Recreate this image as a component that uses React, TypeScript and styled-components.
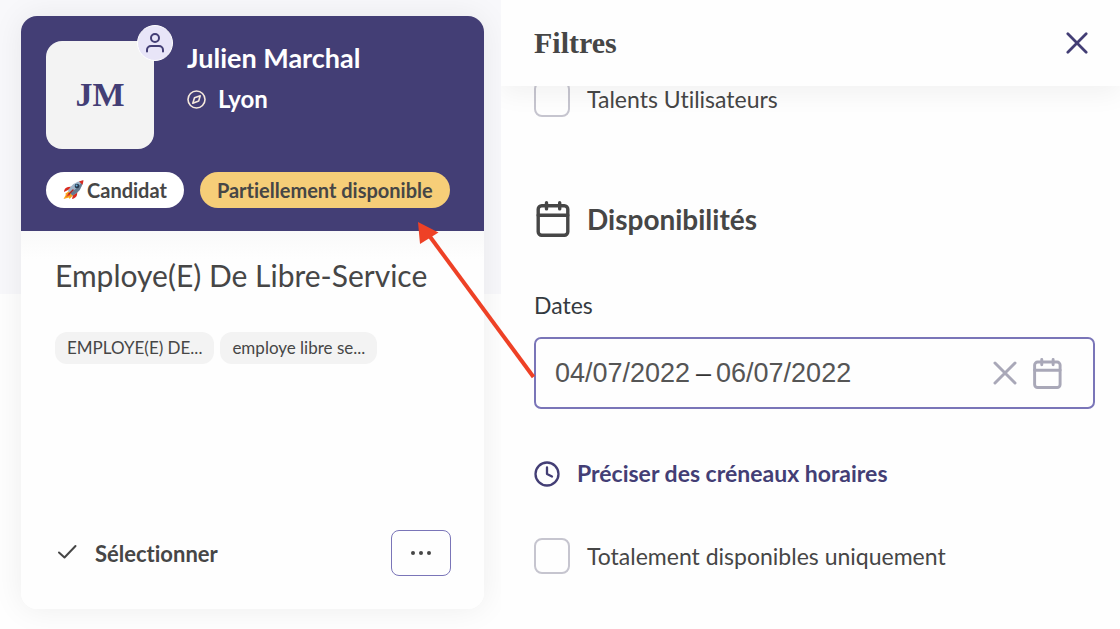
import React from "react";
import styled, { createGlobalStyle } from "styled-components";

const color = {
  indigo: "#433e75",
  outline: "#7a75b8",
  text: "#464646",
  muted: "#a9a8b8",
  chip: "#f3f3f3",
  amber: "#f6ce78",
  arrow: "#ee4126",
};

const GlobalStyle = createGlobalStyle`
  *, *::before, *::after { box-sizing: border-box; }
  body {
    margin: 0;
    background: #fefefe;
    color: ${color.text};
    font-family: Lato, sans-serif;
    font-variant-ligatures: none;
  }
  h1, h2, p { margin: 0; }
  button, input { font: inherit; color: inherit; }
  button { background: none; border: 0; padding: 0; cursor: pointer; font-variant-ligatures: none; }
  svg { display: block; flex: none; }
`;

const Page = styled.div`
  position: relative;
  display: grid;
  grid-template-columns: 501fr 619fr;
  min-height: 100vh;
`;

const Results = styled.main`
  display: flex;
  padding: 16px 17px 20px 21px;
  overflow: hidden;
  background: linear-gradient(#f8f8fb 294px, #fefefe 294px);
`;

const Card = styled.article`
  flex: 1;
  display: flex;
  flex-direction: column;
  min-width: 0;
  border-radius: 16px;
  background: #fefefe;
  box-shadow: 0 0 32px rgba(0, 0, 0, 0.07);
`;

const CardHeader = styled.header`
  padding: 25px 25px 23px;
  border-radius: 16px 16px 0 0;
  background: ${color.indigo};
`;

const Identity = styled.div`
  display: flex;
  gap: 33px;
`;

const Avatar = styled.div`
  position: relative;
  display: grid;
  place-items: center;
  width: 108px;
  height: 108px;
  border-radius: 16px;
  background: ${color.chip};
  color: ${color.indigo};
  font: bold 34px/40px "Liberation Serif", serif;
`;

const AvatarBadge = styled.span`
  position: absolute;
  top: -16px;
  right: -19px;
  display: grid;
  place-items: center;
  width: 36px;
  height: 36px;
  border: 1px solid #fff;
  border-radius: 50%;
  background: #e8e5f8;
`;

const Person = styled.div`
  display: flex;
  flex-direction: column;
  gap: 10px;
  color: #fff;
`;

const Name = styled.h1`
  font-size: 27px;
  line-height: 34px;
`;

const City = styled.p`
  display: flex;
  align-items: center;
  gap: 12px;
  font-size: 24px;
  font-weight: bold;
  line-height: 28px;
`;

const Badges = styled.div`
  display: flex;
  gap: 16px;
  margin-top: 23px;
`;

const Badge = styled.span<{ $tone?: "amber" }>`
  display: flex;
  align-items: center;
  gap: 3px;
  height: 36px;
  padding: 0 17px;
  border-radius: 18px;
  background: ${(p) => (p.$tone === "amber" ? color.amber : "#fff")};
  font-size: 20px;
  font-weight: bold;
  white-space: nowrap;
`;

const CardBody = styled.div`
  flex: 1;
  display: flex;
  flex-direction: column;
  padding: 24px 33px 33px 34px;
  border-radius: 0 0 16px 16px;
  background: linear-gradient(#f9f9f9, #fefefe 28px);
`;

const JobTitle = styled.h2`
  font-size: 30px;
  font-weight: normal;
  line-height: 40px;
`;

const Tags = styled.div`
  display: flex;
  gap: 6px;
  margin-top: 37px;
`;

const Tag = styled.span`
  padding: 0 12px;
  border-radius: 12px;
  background: ${color.chip};
  font-size: 17px;
  line-height: 32px;
  white-space: nowrap;
`;

const CardActions = styled.footer`
  display: flex;
  align-items: center;
  justify-content: space-between;
  margin-top: auto;
`;

const SelectButton = styled.button`
  display: flex;
  align-items: center;
  gap: 16px;
  font-size: 22px;
  font-weight: bold;
`;

const MoreButton = styled.button`
  display: grid;
  place-items: center;
  width: 60px;
  height: 46px;
  border: 1px solid ${color.outline};
  border-radius: 8px;
`;

const Panel = styled.aside`
  display: flex;
  flex-direction: column;
  min-width: 0;
  overflow: clip;
  background: #fefefe;
`;

const PanelHeader = styled.header`
  position: relative;
  z-index: 1;
  display: flex;
  align-items: center;
  justify-content: space-between;
  height: 86px;
  padding: 0 32px 0 33px;
  background: #fefefe;
  box-shadow: 0 8px 24px rgba(0, 0, 0, 0.05);
  color: ${color.indigo};
`;

const PanelTitle = styled.h2`
  color: ${color.text};
  font: bold 30px/36px "Liberation Serif", serif;
`;

const Filters = styled.form`
  display: flex;
  flex-direction: column;
  align-items: stretch;
  margin-top: -5px;
  padding: 0 25px 24px 33px;
`;

const CheckRow = styled.label`
  display: flex;
  align-items: center;
  gap: 17px;
  font-size: 23px;
  line-height: 36px;
`;

const Checkbox = styled.input.attrs({ type: "checkbox" })`
  appearance: none;
  flex: none;
  width: 36px;
  height: 36px;
  margin: 0;
  border: 2px solid #c6c5cf;
  border-radius: 8px;
  background: #fefefe;
`;

const SectionTitle = styled.h2`
  display: flex;
  align-items: center;
  gap: 17px;
  margin-top: 84px;
  font-size: 28px;
  line-height: 36px;
`;

const FieldLabel = styled.label`
  margin-top: 54px;
  font-size: 23px;
  line-height: 28px;
  color: #343a40;
`;

const DateField = styled.div`
  display: flex;
  align-items: center;
  gap: 5px;
  height: 72px;
  margin-top: 18px;
  padding: 0 31px 0 19px;
  border: 2px solid ${color.outline};
  border-radius: 7px;
  color: #333;
  font-family: "Liberation Sans", Arial, sans-serif;
  font-size: 27px;
`;

const DateInput = styled.input`
  width: 136px;
  padding: 0;
  border: 0;
  outline: 0;
  background: none;
  color: #555;
`;

const FieldIcons = styled.div`
  display: flex;
  align-items: center;
  gap: 14px;
  margin-left: auto;
  color: ${color.muted};
`;

const SlotButton = styled.button`
  display: flex;
  align-items: center;
  align-self: flex-start;
  gap: 17px;
  margin: 47px 0;
  color: ${color.indigo};
  font-size: 23px;
  font-weight: bold;
  line-height: 35px;
`;

const Arrow = styled.svg`
  position: absolute;
  top: 220px;
  left: 416px;
  z-index: 2;
  pointer-events: none;
`;

const CalendarIcon = ({ size }: { size: number }) => (
  <svg width={size} height={size} viewBox="0 0 36 36" fill="none" stroke="currentColor" strokeWidth="3.4" strokeLinecap="round">
    <rect x="4.200" y="4.700" width="29.600" height="29.600" rx="3.500" />
    <path d="M4.200 14.300h29.600M12.500 1.700v6.200M25.700 1.700v6.200" />
  </svg>
);

const CloseIcon = ({ size }: { size: number }) => (
  <svg width={size} height={size} viewBox="0 0 24 24" fill="none" stroke="currentColor" strokeWidth="3" strokeLinecap="round">
    <path d="M2 2l20 20M22 2L2 22" />
  </svg>
);

const RocketIcon = () => (
  <svg width="21" height="20" viewBox="0 0 21 20">
    <path d="M5 10L1 12q0-4 4-5l5-.5zM10 15l-1 4q4-1 5-4l.5-5z" fill="#d92b20" />
    <path d="M6 11l-4 3 1 .5L.5 19 6 17.500l.5 1.500 4-4z" fill="#f7a51c" />
    <path d="M5.500 13L3 17l4.500-2z" fill="#e8402a" />
    <path d="M5 11Q9 2 20 .5 19.500 11 9.500 15.500z" fill="#9fb4c8" />
    <path d="M7 13Q14 9 20 .5 19 11 9.500 15.500z" fill="#64798f" />
    <path d="M16 1.500Q18 .7 20.500.3q-.2 2.200-1 4.500z" fill="#d92b20" />
    <circle cx="14" cy="6" r="2.300" fill="#26364b" />
    <circle cx="13.600" cy="5.600" r="1" fill="#6bb5e0" />
    <path d="M6 14l4-4" stroke="#b3231c" strokeWidth="1.500" strokeLinecap="round" />
  </svg>
);

export default function App() {
  return (
    <>
      <GlobalStyle />
      <Page>
        <Results>
          <Card>
            <CardHeader>
              <Identity>
                <Avatar>
                  JM
                  <AvatarBadge>
                    <svg width="20" height="20" viewBox="0 0 20 20" fill="none" stroke={color.indigo} strokeWidth="2" strokeLinecap="round">
                      <circle cx="10" cy="5" r="4" />
                      <path d="M2 18.500v-1.500a4 4 0 0 1 4-4h8a4 4 0 0 1 4 4v1.500" />
                    </svg>
                  </AvatarBadge>
                </Avatar>
                <Person>
                  <Name>Julien Marchal</Name>
                  <City>
                    <svg width="19" height="19" viewBox="0 0 19 19" fill="none" stroke="#f6e9dc" strokeWidth="1.600" strokeLinejoin="round">
                      <circle cx="9.500" cy="9.500" r="8.500" />
                      <path d="M13.200 5.800l-1.500 5.200-5.900 2.200 1.700-5.400z" />
                    </svg>
                    Lyon
                  </City>
                </Person>
              </Identity>
              <Badges>
                <Badge>
                  <RocketIcon />
                  Candidat
                </Badge>
                <Badge $tone="amber">Partiellement disponible</Badge>
              </Badges>
            </CardHeader>
            <CardBody>
              <JobTitle>Employe(E) De Libre-Service</JobTitle>
              <Tags>
                <Tag>EMPLOYE(E) DE...</Tag>
                <Tag>employe libre se...</Tag>
              </Tags>
              <CardActions>
                <SelectButton type="button">
                  <svg width="24" height="24" viewBox="0 0 24 24" fill="none" stroke="currentColor" strokeWidth="2" strokeLinecap="round" strokeLinejoin="round">
                    <path d="M4 11.500l5.500 5L20.500 5" />
                  </svg>
                  Sélectionner
                </SelectButton>
                <MoreButton type="button" aria-label="Plus d'actions">
                  <svg width="20" height="4" viewBox="0 0 20 4" fill="currentColor">
                    <circle cx="2" cy="2" r="2" />
                    <circle cx="10" cy="2" r="2" />
                    <circle cx="18" cy="2" r="2" />
                  </svg>
                </MoreButton>
              </CardActions>
            </CardBody>
          </Card>
        </Results>
        <Panel>
          <PanelHeader>
            <PanelTitle>Filtres</PanelTitle>
            <button type="button" aria-label="Fermer">
              <CloseIcon size={22} />
            </button>
          </PanelHeader>
          <Filters>
            <CheckRow>
              <Checkbox />
              Talents Utilisateurs
            </CheckRow>
            <SectionTitle>
              <CalendarIcon size={36} />
              Disponibilités
            </SectionTitle>
            <FieldLabel htmlFor="date-from">Dates</FieldLabel>
            <DateField>
              <DateInput id="date-from" defaultValue="04/07/2022" />
              –
              <DateInput aria-label="Date de fin" defaultValue="06/07/2022" />
              <FieldIcons>
                <button type="button" aria-label="Effacer les dates">
                  <CloseIcon size={24} />
                </button>
                <button type="button" aria-label="Ouvrir le calendrier">
                  <CalendarIcon size={31} />
                </button>
              </FieldIcons>
            </DateField>
            <SlotButton type="button">
              <svg width="26" height="26" viewBox="0 0 26 26" fill="none" stroke="currentColor" strokeWidth="2.300" strokeLinecap="round" strokeLinejoin="round">
                <circle cx="13" cy="13" r="11.500" />
                <path d="M13 6.500V13l5 2.500" />
              </svg>
              Préciser des créneaux horaires
            </SlotButton>
            <CheckRow>
              <Checkbox />
              Totalement disponibles uniquement
            </CheckRow>
          </Filters>
        </Panel>
        <Arrow width="120" height="160" viewBox="0 0 120 160" aria-hidden="true">
          <path d="M12 14L117.500 157" stroke={color.arrow} strokeWidth="4" />
          <path d="M2 2L22.500 12.500 4 24z" fill={color.arrow} />
        </Arrow>
      </Page>
    </>
  );
}
